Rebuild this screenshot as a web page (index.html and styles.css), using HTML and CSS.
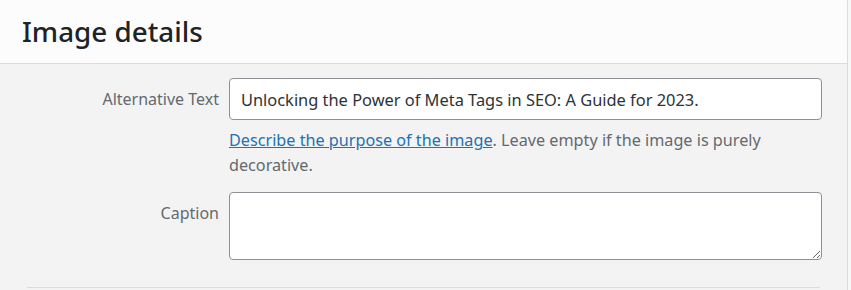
FILE: index.html
```html
<!DOCTYPE html>
<html lang="en">
<head>
    <meta charset="UTF-8">
    <meta name="viewport" content="width=device-width, initial-scale=1.0">
    <title>Image details</title>
    <link rel="stylesheet" href="styles.css">
</head>
<body>
    <div class="frame">
        <div class="panel">
            <header class="panel-head">
                <h1>Image details</h1>
            </header>
            <div class="settings">
                <div class="row">
                    <label for="alt-text">Alternative Text</label>
                    <div class="field">
                        <input type="text" id="alt-text" value="Unlocking the Power of Meta Tags in SEO: A Guide for 2023.">
                        <p class="help"><a href="#">Describe the purpose of the image</a>. Leave empty if the image is purely decorative.</p>
                    </div>
                </div>
                <div class="row">
                    <label for="caption">Caption</label>
                    <div class="field">
                        <textarea id="caption"></textarea>
                    </div>
                </div>
                <div class="divider"></div>
            </div>
        </div>
    </div>
</body>
</html>
```

FILE: styles.css
```css
body {
    margin: 0;
    background: #f6f7f7;
    font-family: 'Noto Sans', 'Open Sans', Arial, sans-serif;
    color: #2c3338;
    height: 290px;
    overflow: hidden;
}
.frame {
    display: flex;
    height: 100%;
}
.panel {
    width: 847px;
    border-right: 1px solid #dcdcde;
    background: #f3f3f3;
}
.panel-head {
    height: 64px;
    background: #fcfcfc;
    border-bottom: 1px solid #dcdcde;
    display: flex;
    align-items: center;
    padding-left: 22px;
    box-sizing: border-box;
}
h1 {
    margin: 0;
    font-size: 27.8px;
    font-weight: 500;
    color: #1d2327;
    padding-bottom: 1px;
}
.settings {
    padding: 14px 25px 0 27px;
}
.row {
    display: grid;
    grid-template-columns: 192px 593px;
    column-gap: 10px;
    margin-bottom: 14px;
}
label {
    text-align: right;
    font-size: 16px;
    color: #646970;
    padding-top: 10px;
}
input[type="text"],
textarea {
    box-sizing: border-box;
    width: 100%;
    border: 1px solid #8c8f94;
    border-radius: 4px;
    background: #fff;
    font-family: inherit;
    color: #2c3338;
    margin: 0;
}
input[type="text"] {
    height: 42px;
    padding: 0 11px;
    font-size: 16.4px;
}
textarea {
    display: block;
    height: 68px;
    resize: vertical;
}
.help {
    margin: 8px 0 0 0;
    font-size: 16.2px;
    line-height: 25px;
    color: #646970;
}
.help a {
    color: #2271b1;
}
.divider {
    margin-top: 27px;
    width: 793px;
    border-top: 1px solid #dcdcde;
}
```
